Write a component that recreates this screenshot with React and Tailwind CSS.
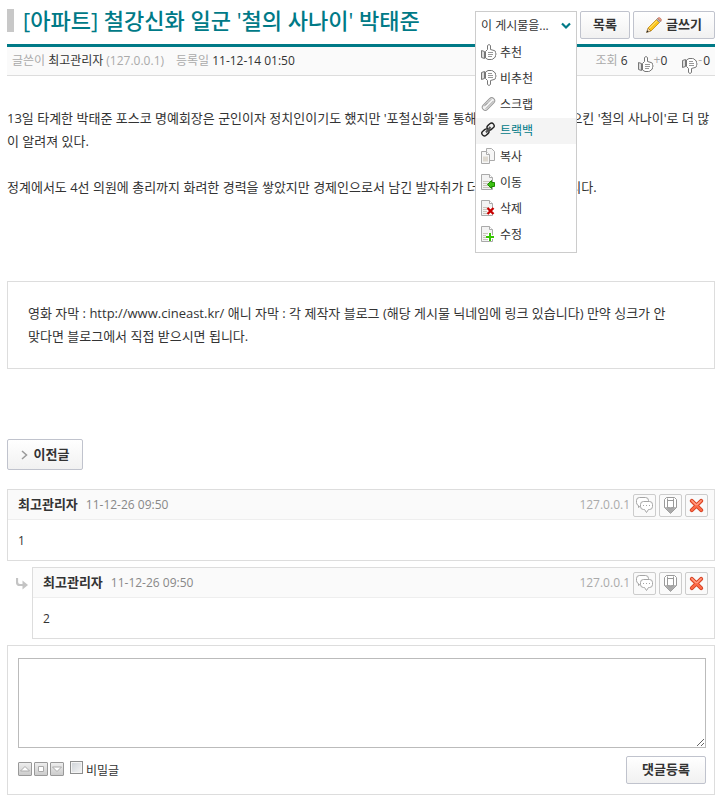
import { useState } from 'react';

const comments = [
  { id: 1, author: '최고관리자', date: '11-12-26 09:50', ip: '127.0.0.1', body: '1', reply: false },
  { id: 2, author: '최고관리자', date: '11-12-26 09:50', ip: '127.0.0.1', body: '2', reply: true },
];

function ThumbIcon({ down = false }) {
  return (
    <svg width="16" height="16" viewBox="0 0 16 16" fill="#fff" stroke="#777" strokeLinejoin="round" className={down ? '-scale-y-100' : ''}>
      <path d="M.5 6.5 3.5 7.5V14.5L.5 13.5z" fill="#ddd" />
      <path d="M4.5 7.5 6.5 5.500V1.5Q8 -.5 9.500 1.5V5.5L13 6.5Q15 7 14.500 8.5Q15.500 10 14.500 11.5Q14.800 13.500 13 14Q12 15.500 10.500 15.500H7L4.500 14z" />
      <path d="M7 8.500h5M7 10.500h5M7 12.500h4" stroke="#999" />
    </svg>
  );
}

function ClipIcon() {
  return (
    <svg width="16" height="16" viewBox="0 0 16 16" fill="none" strokeLinecap="round">
      <rect x="-7.5" y="-3" width="15" height="6" rx="3" transform="translate(7.5 8) rotate(-45)" fill="#f3f3f3" stroke="#999" />
      <path d="M5 12.5 12.5 5M3.5 10 10 3.5M6 7.5 4.5 9" stroke="#999" />
    </svg>
  );
}

function ChainIcon() {
  return (
    <svg width="16" height="16" viewBox="0 0 16 16" fill="none" stroke="#222" strokeWidth="1.4">
      <rect x="-3.8" y="-2.6" width="7.6" height="5.2" rx="2.6" transform="translate(9.6 4.6) rotate(-40)" />
      <rect x="-3.8" y="-2.6" width="7.6" height="5.2" rx="2.6" transform="translate(4.4 10.4) rotate(-40)" />
      <path d="M5 10.5 9.5 5" stroke="#555" strokeWidth="2" />
    </svg>
  );
}

function CopyIcon() {
  return (
    <svg width="16" height="16" viewBox="0 0 16 16" fill="#f6f6f6" stroke="#aaa">
      <path d="M5.5 .5h5l3 3v9h-8z" />
      <path d="M.5 3.500h5l3 3v9h-8z" />
      <path d="M5.5 3.5v3h3" fill="#fff" />
      <path d="M2 8.5h5v5H2z" fill="#ddd8cf" stroke="none" />
    </svg>
  );
}

function PageIcon({ children }) {
  return (
    <svg width="16" height="16" viewBox="0 0 16 16">
      <path d="M.5 .5h8l3 3v12H.5z" fill="#f3f3f3" stroke="#aaa" />
      <path d="M8.5 .5v3h3" fill="#fff" stroke="#aaa" />
      <path d="M2 7.5h7M2 9.5h5M2 11.5h5M2 13.5h7" stroke="#c9c4ba" />
      {children}
    </svg>
  );
}

function MoveIcon() {
  return (
    <PageIcon>
      <path d="M6.5 10.5 10.5 6.5V8.5H13.5V12.5H10.5V14.5z" fill="#3cc012" stroke="#1d8a00" />
    </PageIcon>
  );
}

function DeleteIcon() {
  return (
    <PageIcon>
      <path d="M7 8.5 12 13.5M12 8.5 7 13.5" stroke="#fff" strokeWidth="4" />
      <path d="M6.5 8 12.5 14M12.5 8 6.5 14" stroke="#c70000" strokeWidth="2.4" />
    </PageIcon>
  );
}

function EditIcon() {
  return (
    <PageIcon>
      <path d="M9 7v8M5 11h8" stroke="#fff" strokeWidth="4" />
      <path d="M9 7v8M5 11h8" stroke="#35c400" strokeWidth="2" />
    </PageIcon>
  );
}

function PencilIcon() {
  return (
    <svg width="16" height="16" viewBox="0 0 16 16">
      <path d="M.5 15.5 2 11 5 14z" fill="#f1d3a3" stroke="#8b6a33" strokeWidth=".7" />
      <path d="M.5 15.5 1.2 13.3 2.7 14.8z" fill="#222" />
      <path d="M2 11 10.5 2.5 13.5 5.5 5 14z" fill="#fbc51b" stroke="#b97c06" strokeWidth=".7" />
      <path d="M3.2 11.5 11 3.7" stroke="#ffe98a" />
      <path d="M10.5 2.5 11.7 1.3 14.7 4.3 13.5 5.5z" fill="#bbb" stroke="#777" strokeWidth=".6" />
      <path d="M11.7 1.3Q13 -.2 14.6 1.4T14.7 4.3z" fill="#f0a48e" stroke="#b0543e" strokeWidth=".6" />
    </svg>
  );
}

function BubblesIcon() {
  return (
    <svg width="17" height="17" viewBox="0 0 17 17" fill="#fff" stroke="#a5a5a5">
      <path d="M3.5 .5h6q3 0 3 3v2q0 3-3 3H5l-2.500 2V8.5Q.5 8 .5 5.500v-2Q.5 .5 3.500 .5z" />
      <path d="M7.5 4.5h6q3 0 3 3v2q0 3-3 3h-1l-2 3-2-3h-1q-3 0-3-3v-2q0-3 3-3z" />
      <path d="M7 8.5h1M10 8.5h1M13 8.5h1" />
    </svg>
  );
}

function CrayonIcon() {
  return (
    <svg width="13" height="17" viewBox="0 0 13 17" fill="#fff" stroke="#999">
      <path d="M.5 2.5 2.5 .5h8l2 2v8l-6 6-6-6z" />
      <path d="M2 11.5q2-2 4.500-1 2.500-1 4.500 1l-4.500 5z" fill="#aaa" stroke="none" />
      <path d="M3.5 1.500v9M9.5 1.500v9M3.5 3.500h6M.5 10.500q1.500 1 3 0 3 1 6 0 1.500 1 3 0" fill="none" />
    </svg>
  );
}

function CrossIcon() {
  return (
    <svg width="15" height="15" viewBox="0 0 16 16" strokeLinecap="round">
      <path d="M3 3 13 13M13 3 3 13" stroke="#cf3a1c" strokeWidth="4.2" />
      <path d="M3 3 13 13M13 3 3 13" stroke="#fb6a48" strokeWidth="2.6" />
      <path d="M3 2.8 7.5 7.2M13 2.8 8.5 7.2" stroke="#ffa188" strokeWidth="1.2" />
    </svg>
  );
}

const menuItems = [
  { label: '추천', icon: <ThumbIcon /> },
  { label: '비추천', icon: <ThumbIcon down /> },
  { label: '스크랩', icon: <ClipIcon /> },
  { label: '트랙백', icon: <ChainIcon /> },
  { label: '복사', icon: <CopyIcon /> },
  { label: '이동', icon: <MoveIcon /> },
  { label: '삭제', icon: <DeleteIcon /> },
  { label: '수정', icon: <EditIcon /> },
];

function PostMenu() {
  const [open, setOpen] = useState(true);
  const [active, setActive] = useState('트랙백');

  return (
    <div className="relative h-7 w-[102px]">
      <div className="absolute top-0 left-0 z-10 w-full border border-[#ccc] bg-white">
        <button
          type="button"
          aria-expanded={open}
          onClick={() => setOpen(!open)}
          className="flex h-7 w-full items-center justify-between px-[5px] text-xs"
        >
          이 게시물을...
          <svg width="10" height="8" viewBox="0 0 10 8" fill="none" stroke="#007a87" strokeWidth="2.2">
            <path d="M1 1.5 5 5.5 9 1.5" />
          </svg>
        </button>
        {open && (
          <ul className="pb-1">
            {menuItems.map((item) => (
              <li key={item.label}>
                <a
                  href="#"
                  onMouseEnter={() => setActive(item.label)}
                  className={
                    item.label === active
                      ? 'flex h-[26px] items-center gap-[3px] bg-[#f4f4f4] pl-[5px] text-xs text-[#007a87]'
                      : 'flex h-[26px] items-center gap-[3px] pl-[5px] text-xs'
                  }
                >
                  <span className="pb-0.5">{item.icon}</span>
                  {item.label}
                </a>
              </li>
            ))}
          </ul>
        )}
      </div>
    </div>
  );
}

const buttonClass =
  'flex items-center justify-center rounded-[2px] border border-[#c0c3cd] bg-linear-to-b from-white to-[#f1f1f1] text-[13px] font-bold';
const iconButtonClass = 'flex size-[23px] items-center justify-center rounded-[2px] border border-[#ccc] bg-[#fafafa]';

function Comment({ comment }) {
  return (
    <li className="flex">
      {comment.reply && (
        <div className="w-[25px] shrink-0 pt-[10px] pl-[9px]">
          <svg width="12" height="13" viewBox="0 0 12 13">
            <path d="M1 1v4q0 3 3 3h3" fill="none" stroke="#c4c4c4" strokeWidth="2.2" />
            <path d="M6.5 3.5 12 8 6.5 12.5z" fill="#c4c4c4" />
          </svg>
        </div>
      )}
      <article className="min-w-0 flex-1 border border-[#ddd]">
        <header className="flex h-[30px] items-center border-b border-[#eee] bg-[#fafafa] pr-1.5 pl-2.5 text-xs">
          <strong className="text-[13px]">{comment.author}</strong>
          <span className="ml-2 text-[#888]">{comment.date}</span>
          <span className="ml-auto text-[#aaa]">{comment.ip}</span>
          <div className="ml-[3px] flex gap-[3px] pt-px">
            <button type="button" aria-label="댓글" className={iconButtonClass}><BubblesIcon /></button>
            <button type="button" aria-label="수정" className={iconButtonClass}><CrayonIcon /></button>
            <button type="button" aria-label="삭제" className={iconButtonClass}><CrossIcon /></button>
          </div>
        </header>
        <p className="px-2.5 pt-[9px] pb-[7px] text-xs leading-6">{comment.body}</p>
      </article>
    </li>
  );
}

const sizeButtonClass = 'flex size-3.5 items-center justify-center rounded-[1px] border border-[#999] bg-linear-to-b from-[#eee] to-[#ccc]';

function CommentForm() {
  return (
    <form className="mt-1.5 border border-[#ddd] pt-3 pr-2 pb-2.5 pl-2.5" onSubmit={(event) => event.preventDefault()}>
      <textarea aria-label="댓글" className="block h-[90px] w-full resize-y border border-[#bbb] bg-white p-1 text-xs outline-none" />
      <div className="mt-2 flex items-center">
        <div className="flex gap-0.5 pb-0.5">
          <button type="button" aria-label="줄이기" className={sizeButtonClass}>
            <svg width="10" height="8" viewBox="0 0 10 8" className="shrink-0"><path d="M.5 6 5 1.5 9.5 6z" fill="#fff" stroke="#aaa" /></svg>
          </button>
          <button type="button" aria-label="처음 크기" className={sizeButtonClass}>
            <svg width="8" height="8" viewBox="0 0 8 8"><path d="M1.5 1.5h5v5h-5z" fill="#fff" stroke="#aaa" /></svg>
          </button>
          <button type="button" aria-label="늘리기" className={sizeButtonClass}>
            <svg width="10" height="8" viewBox="0 0 10 8" className="shrink-0"><path d="M.5 2 5 6.5 9.5 2z" fill="#fff" stroke="#aaa" /></svg>
          </button>
        </div>
        <label className="ml-1.5 flex items-start gap-[3px] text-xs">
          <input
            type="checkbox"
            className="size-[13px] appearance-none border border-[#8e8f8f] bg-linear-to-br from-[#cdd2d7] to-[#f6f6f6] shadow-[inset_0_0_0_1px_#f4f4f4] checked:bg-[#007a87]"
          />
          <span className="pt-0.5">비밀글</span>
        </label>
        <button type="submit" className={`${buttonClass} ml-auto h-7 w-20`}>댓글등록</button>
      </div>
    </form>
  );
}

export default function App() {
  return (
    <main className="bg-white pt-[9px] pr-2.5 pb-0.5 pl-[7px] font-['Open_Sans','Noto_Sans_CJK_KR',sans-serif] text-[#333]">
      <header className="flex h-[35px] items-start justify-between">
        <h1 className="flex items-center gap-[9px] text-[22px] leading-[23px] font-medium whitespace-nowrap text-[#007a87]">
          <span className="h-[23px] w-[7px] bg-[#c8c8c8]" />
          [아파트] 철강신화 일군 '철의 사나이' 박태준
        </h1>
        <div className="flex gap-[3px] pt-0.5">
          <PostMenu />
          <button type="button" className={`${buttonClass} h-7 w-[50px]`}>목록</button>
          <button type="button" className={`${buttonClass} h-7 w-[82px] gap-1`}>
            <PencilIcon />
            글쓰기
          </button>
        </div>
      </header>

      <div className="flex h-8 items-center border-t-3 border-b border-t-[#007a87] border-b-[#ddd] bg-[#fafafa] px-[5px] text-xs">
        <span className="text-[#aaa]">글쓴이</span>
        <span className="ml-[3px]">최고관리자</span>
        <span className="ml-[3px] text-[#aaa]">(127.0.0.1)</span>
        <span className="ml-3 text-[#aaa]">등록일</span>
        <span className="ml-[3px]">11-12-14 01:50</span>
        <span className="ml-auto text-[#aaa]">조회</span>
        <span className="ml-[3px]">6</span>
        <span className="ml-2.5 flex items-center">
          <span className="pt-1.5"><ThumbIcon /></span>
          <span className="pb-0.5 text-[#aaa]">+</span>0
        </span>
        <span className="ml-[15px] flex items-center">
          <span className="pt-2.5"><ThumbIcon down /></span>
          <span className="pr-px pb-0.5 text-[#aaa]">-</span>0
        </span>
      </div>

      <article className="pt-[31px] text-[13px] leading-[23px]">
        <p>
          13일 타계한 박태준 포스코 명예회장은 군인이자 정치인이기도 했지만 '포철신화'를 통해 우리 산업화를 일으킨 '철의 사나이'로 더 많이 알려져 있다.
        </p>
        <p className="mt-[23px]">
          정계에서도 4선 의원에 총리까지 화려한 경력을 쌓았지만 경제인으로서 남긴 발자취가 더 크다고 평가받습니다.
        </p>
      </article>

      <aside className="mt-[82px] border border-[#ddd] py-5 pr-11 pl-5 text-[13px] leading-[23px]">
        영화 자막 : http://www.cineast.kr/ 애니 자막 : 각 제작자 블로그 (해당 게시물 닉네임에 링크 있습니다) 만약 싱크가 안맞다면 블로그에서 직접 받으시면 됩니다.
      </aside>

      <button type="button" className={`${buttonClass} mt-[70px] h-[31px] w-[76px] gap-1.5`}>
        <svg width="7" height="10" viewBox="0 0 7 10" fill="none" stroke="#999" strokeWidth="1.5">
          <path d="M1 1 5.5 5 1 9" />
        </svg>
        이전글
      </button>

      <ul className="mt-[19px] flex flex-col gap-1.5">
        {comments.map((comment) => (
          <Comment key={comment.id} comment={comment} />
        ))}
      </ul>

      <CommentForm />
    </main>
  );
}
